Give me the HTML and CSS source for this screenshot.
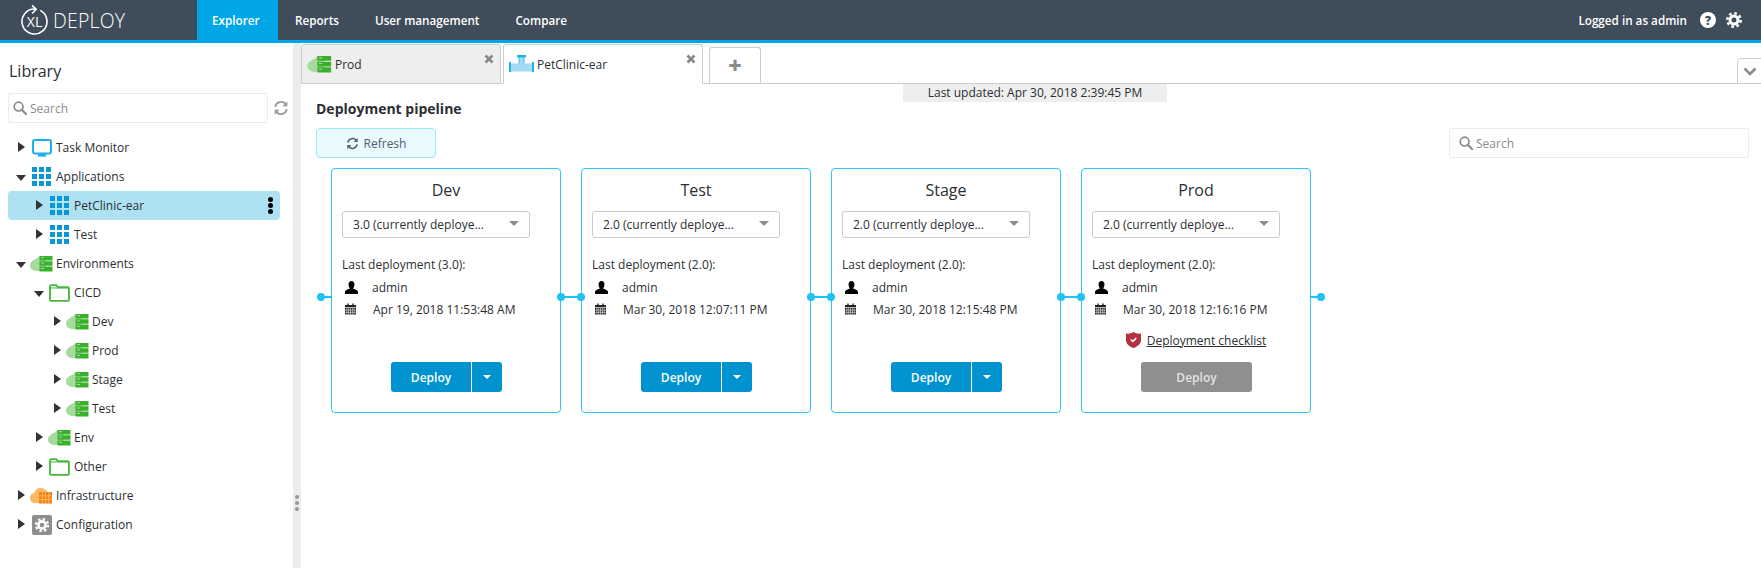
FILE: index.html
```html
<!DOCTYPE html>
<html lang="en">

<head>
    <meta charset="UTF-8">
    <title>XL Deploy</title>
    <link rel="stylesheet" href="styles.css">
</head>

<body>
    <svg class="defs">
        <symbol id="i-search" viewBox="0 0 14 14">
            <circle cx="5.6" cy="5.6" r="4.4" fill="none" stroke="currentColor" stroke-width="1.7" />
            <path d="M8.8 8.8L13 13" stroke="currentColor" stroke-width="2.2" stroke-linecap="round" />
        </symbol>
        <symbol id="i-sync" viewBox="0 0 14 14">
            <path d="M2 6A5.2 5.2 0 0 1 11 3.4M12 8A5.2 5.2 0 0 1 3 10.6" fill="none" stroke="currentColor" stroke-width="1.6" />
            <path d="M12.6 1v4.4H8.2zM1.4 13V8.6h4.4z" fill="currentColor" />
        </symbol>
        <symbol id="i-monitor" viewBox="0 0 20 18">
            <rect x="1" y="1" width="18" height="13.5" rx="2" fill="#fff" stroke="#1bb1ea" stroke-width="2" />
            <path d="M6 15h8v2.6H6z" fill="#1bb1ea" />
        </symbol>
        <symbol id="i-grid" viewBox="0 0 19 19">
            <g fill="#0a97d5">
                <path d="M0 0h5v5H0zM7 0h5v5H7zM14 0h5v5h-5z" />
                <path d="M0 7h5v5H0zM7 7h5v5H7zM14 7h5v5h-5z" />
                <path d="M0 14h5v5H0zM7 14h5v5H7zM14 14h5v5h-5z" />
            </g>
        </symbol>
        <symbol id="i-env" viewBox="0 0 23 17">
            <path d="M7 3.5C9 .5 13 0 16 1.5V16H7C2.5 16 0 13.5 0 10.5S3 5 7 3.5z" fill="#a6da9e" />
            <path d="M9.500 1h13v4.500h-13zM9.500 6.300h13v4.500h-13zM9.500 11.600h13v4.900h-13z" fill="#3bb02c" />
            <path d="M11 2.700h3M11 8h3M11 13.500h3" stroke="#a6da9e" stroke-width="1" />
        </symbol>
        <symbol id="i-folder" viewBox="0 0 20 17">
            <path d="M1 15V2.500C1 1.700 1.500 1 2.300 1H7l1.500 2h9.500c.6 0 1 .5 1 1v11c0 .6-.4 1-1 1H2c-.6 0-1-.4-1-1z" fill="#fff" stroke="#4ab83c" stroke-width="1.800" />
            <path d="M1.500 3.700h17" stroke="#4ab83c" stroke-width="1" />
        </symbol>
        <symbol id="i-infra" viewBox="0 0 23 17">
            <path d="M4 6C6 1 11-.5 14 2c2 1 4 2 4 5v9H5C2 16 0 14 0 11s2-4.500 4-5z" fill="#fdb866" />
            <path d="M9 5h13v11.500H9z" fill="#f5820f" />
            <path d="M12.300 5v11.500M15.500 5v11.500M18.800 5v11.500M9 8.800h13M9 12.600h13" stroke="#fdb866" stroke-width="1" />
        </symbol>
        <symbol id="i-config" viewBox="0 0 20 20">
            <rect width="20" height="20" rx="2" fill="#8e8e8e" />
            <circle cx="10" cy="10" r="3.600" fill="none" stroke="#fff" stroke-width="2.600" />
            <circle cx="10" cy="10" r="6" fill="none" stroke="#fff" stroke-width="2.200" stroke-dasharray="2.400 2.312" />
        </symbol>
        <symbol id="i-gear" viewBox="0 0 16 16">
            <circle cx="8" cy="8" r="4" fill="none" stroke="currentColor" stroke-width="3" />
            <circle cx="8" cy="8" r="6.700" fill="none" stroke="currentColor" stroke-width="2.600" stroke-dasharray="2.700 2.560" />
        </symbol>
        <symbol id="i-pipe" viewBox="0 0 25 18">
            <path d="M1 8.500h23v8H1z" fill="#a3dbf7" />
            <path d="M10 2h5v7h-5z" fill="#a3dbf7" />
            <path d="M8 0h9v2.500H8zM0 7h2v10H0zM23 7h2v10h-2z" fill="#1eb4e4" />
            <path d="M10 2.500v6M15 2.500v6" stroke="#1eb4e4" stroke-width=".8" fill="none" />
        </symbol>
        <symbol id="i-close" viewBox="0 0 10 10">
            <path d="M1.500 1.500l7 7M8.500 1.500l-7 7" stroke="currentColor" stroke-width="2.600" />
        </symbol>
        <symbol id="i-user" viewBox="0 0 14 14">
            <path d="M7 0c2 0 3.200 1.500 3.200 3.500S9.300 7 8.700 8.200c1.800.9 5.300 1.500 5.300 3.800v2H0v-2c0-2.300 3.500-2.900 5.300-3.800C4.700 7 3.800 5.500 3.800 3.500S5 0 7 0z" fill="#000" />
        </symbol>
        <symbol id="i-cal" viewBox="0 0 12 12">
            <path d="M0 1.500h2.500V0h1.500v1.500h4V0h1.500v1.500H12V4H0z" fill="#222" />
            <path d="M0 4.800h12V12H0z" fill="#222" />
            <path d="M2 4.800V12M4 4.800V12M6 4.800V12M8 4.800V12M10 4.800V12M0 7.200h12M0 9.600h12" stroke="#fff" stroke-width=".6" />
        </symbol>
        <symbol id="i-shield" viewBox="0 0 15 16">
            <path d="M0 1.500C3 2 5 1.500 7.500 0 10 1.500 12 2 15 1.500V8c0 4-3.500 6.500-7.500 8C3.500 14.500 0 12 0 8z" fill="#b3303d" />
            <path d="M4.800 7.500l2 2 3.400-3.400" fill="none" stroke="#fff" stroke-width="1.500" />
        </symbol>
    </svg>

    <!-- header -->
    <header class="topbar">
        <div class="logo">
            <svg class="logo-mark" viewBox="0 0 30 32">
                <path d="M20.300 7.400A12.500 12.500 0 1 1 15.500 6" fill="none" stroke="#fff" stroke-width="1.600" />
                <path d="M12 2.300L16.200 6.300 12 10.500" fill="none" stroke="#fff" stroke-width="1.600" />
                <text class="logo-xl" x="14.500" y="23.500" text-anchor="middle">XL</text>
            </svg>
            <span class="logo-name">DEPLOY</span>
        </div>
        <nav class="nav">
            <a class="nav-item active">Explorer</a>
            <a class="nav-item">Reports</a>
            <a class="nav-item">User management</a>
            <a class="nav-item">Compare</a>
        </nav>
        <div class="userbox">
            <span>Logged in as admin</span>
            <span class="help">?</span>
            <svg class="gear"><use href="#i-gear" /></svg>
        </div>
    </header>

    <div class="main">
        <!-- library -->
        <aside class="sidebar">
            <h2 class="lib-title">Library</h2>
            <div class="lib-search">
                <div class="search-box">
                    <svg class="search-icon"><use href="#i-search" /></svg>
                    <span>Search</span>
                </div>
                <svg class="lib-sync"><use href="#i-sync" /></svg>
            </div>
            <ul class="tree">
                <li class="node l0"><i class="arrow right"></i><svg class="ticon mon"><use href="#i-monitor" /></svg><span>Task Monitor</span></li>
                <li class="node l0"><i class="arrow down"></i><svg class="ticon grid"><use href="#i-grid" /></svg><span>Applications</span></li>
                <li class="node l1 selected"><i class="arrow right"></i><svg class="ticon grid"><use href="#i-grid" /></svg><span>PetClinic-ear</span><b class="kebab"><u></u><u></u><u></u></b></li>
                <li class="node l1"><i class="arrow right"></i><svg class="ticon grid"><use href="#i-grid" /></svg><span>Test</span></li>
                <li class="node l0"><i class="arrow down"></i><svg class="ticon"><use href="#i-env" /></svg><span>Environments</span></li>
                <li class="node l1"><i class="arrow down"></i><svg class="ticon fold"><use href="#i-folder" /></svg><span>CICD</span></li>
                <li class="node l2"><i class="arrow right"></i><svg class="ticon"><use href="#i-env" /></svg><span>Dev</span></li>
                <li class="node l2"><i class="arrow right"></i><svg class="ticon"><use href="#i-env" /></svg><span>Prod</span></li>
                <li class="node l2"><i class="arrow right"></i><svg class="ticon"><use href="#i-env" /></svg><span>Stage</span></li>
                <li class="node l2"><i class="arrow right"></i><svg class="ticon"><use href="#i-env" /></svg><span>Test</span></li>
                <li class="node l1"><i class="arrow right"></i><svg class="ticon"><use href="#i-env" /></svg><span>Env</span></li>
                <li class="node l1"><i class="arrow right"></i><svg class="ticon fold"><use href="#i-folder" /></svg><span>Other</span></li>
                <li class="node l0"><i class="arrow right"></i><svg class="ticon"><use href="#i-infra" /></svg><span>Infrastructure</span></li>
                <li class="node l0"><i class="arrow right"></i><svg class="ticon mon"><use href="#i-config" /></svg><span>Configuration</span></li>
            </ul>
        </aside>

        <div class="splitter"><u></u><u></u><u></u></div>

        <!-- workspace -->
        <section class="work">
            <div class="tabs">
                <div class="tab">
                    <svg class="tab-icon"><use href="#i-env" /></svg>
                    <span>Prod</span>
                    <svg class="tab-close"><use href="#i-close" /></svg>
                </div>
                <div class="tab current">
                    <svg class="tab-icon"><use href="#i-pipe" /></svg>
                    <span>PetClinic-ear</span>
                    <svg class="tab-close"><use href="#i-close" /></svg>
                </div>
                <div class="tab-add">+</div>
                <div class="tab-more">
                    <svg viewBox="0 0 14 9"><path d="M1.500 1.500L7 7l5.500-5.500" fill="none" stroke="currentColor" stroke-width="2.600" /></svg>
                </div>
            </div>

            <div class="status"><span>Last updated: Apr 30, 2018 2:39:45 PM</span></div>
            <h3 class="pipe-title">Deployment pipeline</h3>

            <div class="toolbar">
                <button class="refresh"><svg><use href="#i-sync" /></svg>Refresh</button>
                <div class="search-box pipe-search">
                    <svg class="search-icon"><use href="#i-search" /></svg>
                    <span>Search</span>
                </div>
            </div>

            <div class="pipeline">
                <div class="card">
                    <span class="wire in first"></span>
                    <span class="wire out"></span>
                    <h4>Dev</h4>
                    <div class="select"><span>3.0 (currently deploye...</span><i></i></div>
                    <p class="last">Last deployment (3.0):</p>
                    <p class="meta"><svg class="m-user"><use href="#i-user" /></svg><span>admin</span></p>
                    <p class="meta date"><svg class="m-cal"><use href="#i-cal" /></svg><span>Apr 19, 2018 11:53:48 AM</span></p>
                    <div class="actions">
                        <a class="btn main-btn">Deploy</a><a class="btn drop-btn"><i></i></a>
                    </div>
                </div>
                <div class="card">
                    <span class="wire in"></span>
                    <span class="wire out"></span>
                    <h4>Test</h4>
                    <div class="select"><span>2.0 (currently deploye...</span><i></i></div>
                    <p class="last">Last deployment (2.0):</p>
                    <p class="meta"><svg class="m-user"><use href="#i-user" /></svg><span>admin</span></p>
                    <p class="meta date"><svg class="m-cal"><use href="#i-cal" /></svg><span>Mar 30, 2018 12:07:11 PM</span></p>
                    <div class="actions">
                        <a class="btn main-btn">Deploy</a><a class="btn drop-btn"><i></i></a>
                    </div>
                </div>
                <div class="card">
                    <span class="wire in"></span>
                    <span class="wire out"></span>
                    <h4>Stage</h4>
                    <div class="select"><span>2.0 (currently deploye...</span><i></i></div>
                    <p class="last">Last deployment (2.0):</p>
                    <p class="meta"><svg class="m-user"><use href="#i-user" /></svg><span>admin</span></p>
                    <p class="meta date"><svg class="m-cal"><use href="#i-cal" /></svg><span>Mar 30, 2018 12:15:48 PM</span></p>
                    <div class="actions">
                        <a class="btn main-btn">Deploy</a><a class="btn drop-btn"><i></i></a>
                    </div>
                </div>
                <div class="card">
                    <span class="wire in"></span>
                    <span class="wire out last-out"></span>
                    <h4>Prod</h4>
                    <div class="select"><span>2.0 (currently deploye...</span><i></i></div>
                    <p class="last">Last deployment (2.0):</p>
                    <p class="meta"><svg class="m-user"><use href="#i-user" /></svg><span>admin</span></p>
                    <p class="meta date"><svg class="m-cal"><use href="#i-cal" /></svg><span>Mar 30, 2018 12:16:16 PM</span></p>
                    <div class="checklist"><svg><use href="#i-shield" /></svg><a>Deployment checklist</a></div>
                    <div class="actions">
                        <a class="btn off-btn">Deploy</a>
                    </div>
                </div>
            </div>
        </section>
    </div>
</body>

</html>
```
FILE: styles.css
```css
* {
    margin: 0;
    padding: 0;
    box-sizing: border-box;
}

html,
body {
    height: 100%;
    overflow: hidden;
}

body {
    display: flex;
    flex-direction: column;
    background: #fff;
    color: #2b2f33;
    font-family: "Open Sans", "Liberation Sans", sans-serif;
    font-size: 12px;
}

.defs {
    display: none;
}

/* header */
.topbar {
    display: flex;
    flex: 0 0 43px;
    height: 43px;
    background: #3f4c59;
    border-bottom: 3px solid #00a6e5;
    color: #fff;
}

.logo {
    display: flex;
    align-items: center;
    width: 197px;
    padding-left: 20px;
}

.logo-mark {
    width: 30px;
    height: 32px;
    margin-top: -3px;
}

.logo-xl {
    fill: #fff;
    font-family: "Open Sans", sans-serif;
    font-size: 14px;
    font-weight: 400;
}

.logo-name {
    margin-left: 3px;
    font-size: 19.500px;
    font-weight: 300;
    letter-spacing: 0.2px;
}

.nav {
    display: flex;
}

.nav-item {
    display: flex;
    align-items: center;
    padding: 0 19px 0 17px;
    font-size: 11.700px;
    font-weight: 600;
}

.nav-item.active {
    width: 81px;
    background: #00a6e5;
    padding: 0 0 0 15px;
}

.userbox {
    display: flex;
    align-items: center;
    margin-left: auto;
    padding-right: 19px;
    font-size: 11.700px;
    font-weight: 600;
}

.help {
    display: flex;
    align-items: center;
    justify-content: center;
    width: 16px;
    height: 16px;
    margin-left: 13px;
    border-radius: 50%;
    background: #fff;
    color: #3f4c59;
    font-size: 12px;
    font-weight: 800;
}

.gear {
    width: 16px;
    height: 16px;
    margin-left: 10px;
    color: #fff;
}

/* layout */
.main {
    display: flex;
    flex: 1;
    min-height: 0;
}

.sidebar {
    flex: 0 0 293px;
    padding: 18px 0 0 8px;
}

.lib-title {
    margin-left: 1px;
    font-size: 16px;
    font-weight: 400;
    line-height: 20px;
}

.lib-search {
    display: flex;
    align-items: center;
    margin-top: 12px;
}

.search-box {
    display: flex;
    align-items: center;
    width: 260px;
    height: 30px;
    padding-left: 4px;
    border: 1px solid #ececec;
    border-radius: 2px;
    color: #8b8b8b;
}

.search-icon {
    flex: none;
    width: 14px;
    height: 14px;
    margin-right: 3px;
    color: #8b8b8b;
}

.lib-sync {
    width: 16px;
    height: 16px;
    margin-left: 5px;
    color: #9a9a9a;
}

.tree {
    width: 272px;
    margin-top: 10px;
    list-style: none;
}

.node {
    display: flex;
    align-items: center;
    height: 29px;
    border-radius: 4px;
}

.l0 {
    padding-left: 7px;
}

.l1 {
    padding-left: 25px;
}

.l2 {
    padding-left: 43px;
}

.selected {
    background: #aee2f3;
}

.arrow {
    display: flex;
    flex: 0 0 12px;
    justify-content: center;
    width: 0;
    height: 0;
    margin-right: 3px;
}

.arrow::before {
    content: "";
    width: 0;
    height: 0;
}

.arrow.right::before {
    border-top: 5.500px solid transparent;
    border-bottom: 5.500px solid transparent;
    border-left: 7px solid #333;
    margin-top: -5.500px;
}

.arrow.down::before {
    border-left: 5.500px solid transparent;
    border-right: 5.500px solid transparent;
    border-top: 6px solid #333;
    margin-top: -2px;
}

.ticon {
    flex: none;
    width: 23px;
    height: 17px;
    margin-right: 3px;
}

.ticon.grid {
    width: 19px;
    height: 19px;
    margin-left: 2px;
    margin-right: 5px;
}

.ticon.mon {
    width: 20px;
    height: 20px;
    margin-left: 2px;
    margin-right: 4px;
}

.ticon.fold {
    width: 21px;
    height: 18px;
    margin-left: 1px;
    margin-right: 4px;
}

.kebab {
    display: flex;
    flex-direction: column;
    gap: 1px;
    margin-left: auto;
    margin-right: 7px;
}

.kebab u {
    width: 5px;
    height: 5px;
    border-radius: 50%;
    background: #000;
}

.splitter {
    display: flex;
    flex: 0 0 8px;
    flex-direction: column;
    align-items: center;
    gap: 2px;
    padding-top: 452px;
    background: #ececec;
}

.splitter u {
    width: 4px;
    height: 4px;
    border-radius: 50%;
    background: #969696;
}

/* tabs */
.work {
    flex: 1;
    min-width: 0;
}

.tabs {
    display: flex;
    align-items: flex-end;
    gap: 2px;
    height: 41px;
    border-bottom: 1px solid #ccc;
}

.tab {
    display: flex;
    align-items: center;
    position: relative;
    width: 200px;
    height: 40px;
    margin-bottom: -1px;
    padding: 0 0 0 5px;
    background: #eee;
    border: 1px solid #ccc;
    border-radius: 3px 3px 0 0;
}

.tab.current {
    background: #fff;
    border-bottom-color: #fff;
}

.tab-icon {
    flex: none;
    width: 25px;
    height: 18px;
    margin-right: 3px;
}

.tab-close {
    position: absolute;
    top: 9px;
    right: 6px;
    width: 10px;
    height: 10px;
    color: #888;
}

.tab-add {
    display: flex;
    align-items: center;
    justify-content: center;
    width: 52px;
    height: 36px;
    margin-left: 4px;
    border: 1px solid #ccc;
    border-bottom: 0;
    border-radius: 3px 3px 0 0;
    color: #8c8c8c;
    font-size: 23px;
    font-weight: 800;
    line-height: 1;
}

.tab-more {
    display: flex;
    align-items: center;
    justify-content: center;
    width: 24px;
    height: 25px;
    margin-left: auto;
    border: 1px solid #ccc;
    border-right: 0;
    border-bottom: 0;
    border-radius: 5px 0 0 0;
    color: #8c8c8c;
}

.tab-more svg {
    width: 14px;
    height: 9px;
}

/* pipeline */
.status {
    display: flex;
    justify-content: center;
    height: 18px;
    margin-left: 8px;
}

.status span {
    width: 264px;
    background: #eee;
    font-size: 12px;
    line-height: 18px;
    text-align: center;
}

.pipe-title {
    height: 14px;
    margin: 0 0 12px 15px;
    font-size: 14px;
    font-weight: 700;
    line-height: 14px;
}

.toolbar {
    display: flex;
    justify-content: space-between;
    padding: 0 12px 0 15px;
}

.refresh {
    display: flex;
    align-items: center;
    justify-content: center;
    width: 120px;
    height: 30px;
    background: #e9fafe;
    border: 1px solid #9ee6fb;
    border-radius: 4px;
    color: #4d6070;
    font-family: inherit;
    font-size: 12px;
}

.refresh svg {
    width: 13px;
    height: 13px;
    margin-right: 5px;
}

.pipe-search {
    width: 300px;
    padding-left: 9px;
}

.pipeline {
    display: flex;
    gap: 20px;
    margin: 10px 0 0 30px;
}

.card {
    display: flex;
    flex-direction: column;
    position: relative;
    width: 230px;
    height: 245px;
    padding: 10px 10px 20px;
    border: 1px solid #2cc6f7;
    border-radius: 4px;
}

.card h4 {
    font-size: 16px;
    font-weight: 400;
    line-height: 22px;
    text-align: center;
}

/* wires between the cards */
.wire {
    position: absolute;
    top: 127px;
    height: 2px;
    background: #1fc2f5;
}

.wire::after {
    content: "";
    position: absolute;
    top: -3px;
    width: 8px;
    height: 8px;
    border-radius: 50%;
    background: #1fc2f5;
}

.wire.in {
    left: -1px;
    width: 1px;
}

.wire.in::after {
    left: -4px;
}

.wire.in.first {
    left: -11px;
    width: 11px;
}

.wire.out {
    right: -21px;
    width: 21px;
}

.wire.out::after {
    left: -3px;
}

.wire.last-out {
    right: -12px;
    width: 12px;
}

.wire.last-out::after {
    left: auto;
    right: -3px;
}

.select {
    display: flex;
    align-items: center;
    justify-content: space-between;
    width: 188px;
    height: 27px;
    margin-top: 10px;
    padding: 0 10px 0 10px;
    border: 1px solid #ccc;
    border-radius: 3px;
}

.select i {
    width: 0;
    height: 0;
    border-left: 5px solid transparent;
    border-right: 5px solid transparent;
    border-top: 5px solid #8c8c8c;
    margin-top: -2px;
}

.last {
    margin-top: 18px;
    line-height: 18px;
}

.meta {
    display: flex;
    align-items: center;
    height: 22px;
}

.last + .meta {
    margin-top: 2px;
}

.meta svg {
    flex: none;
}

.m-user {
    width: 13px;
    height: 13px;
    margin: 0 14px 0 3px;
}

.m-cal {
    width: 11px;
    height: 12px;
    margin: 0 17px 0 3px;
}

.checklist {
    display: flex;
    align-items: center;
    justify-content: center;
    height: 18px;
    margin-top: auto;
}

.checklist svg {
    width: 15px;
    height: 16px;
    margin-right: 6px;
}

.checklist a {
    text-decoration: underline;
}

.actions {
    display: flex;
    justify-content: center;
    margin-top: auto;
    padding-left: 1px;
}

.checklist + .actions {
    margin-top: 13px;
}

.btn {
    display: flex;
    align-items: center;
    justify-content: center;
    height: 30px;
    color: #fff;
    font-weight: 600;
}

.main-btn {
    width: 80px;
    background: #0093cf;
    border-radius: 3px 0 0 3px;
}

.drop-btn {
    width: 30px;
    margin-left: 1px;
    background: #0093cf;
    border-radius: 0 3px 3px 0;
}

.drop-btn i {
    width: 0;
    height: 0;
    border-left: 4px solid transparent;
    border-right: 4px solid transparent;
    border-top: 4px solid #fff;
}

.off-btn {
    width: 111px;
    background: #8f8f8f;
    border-radius: 3px;
    color: #e2e2e2;
}
```
